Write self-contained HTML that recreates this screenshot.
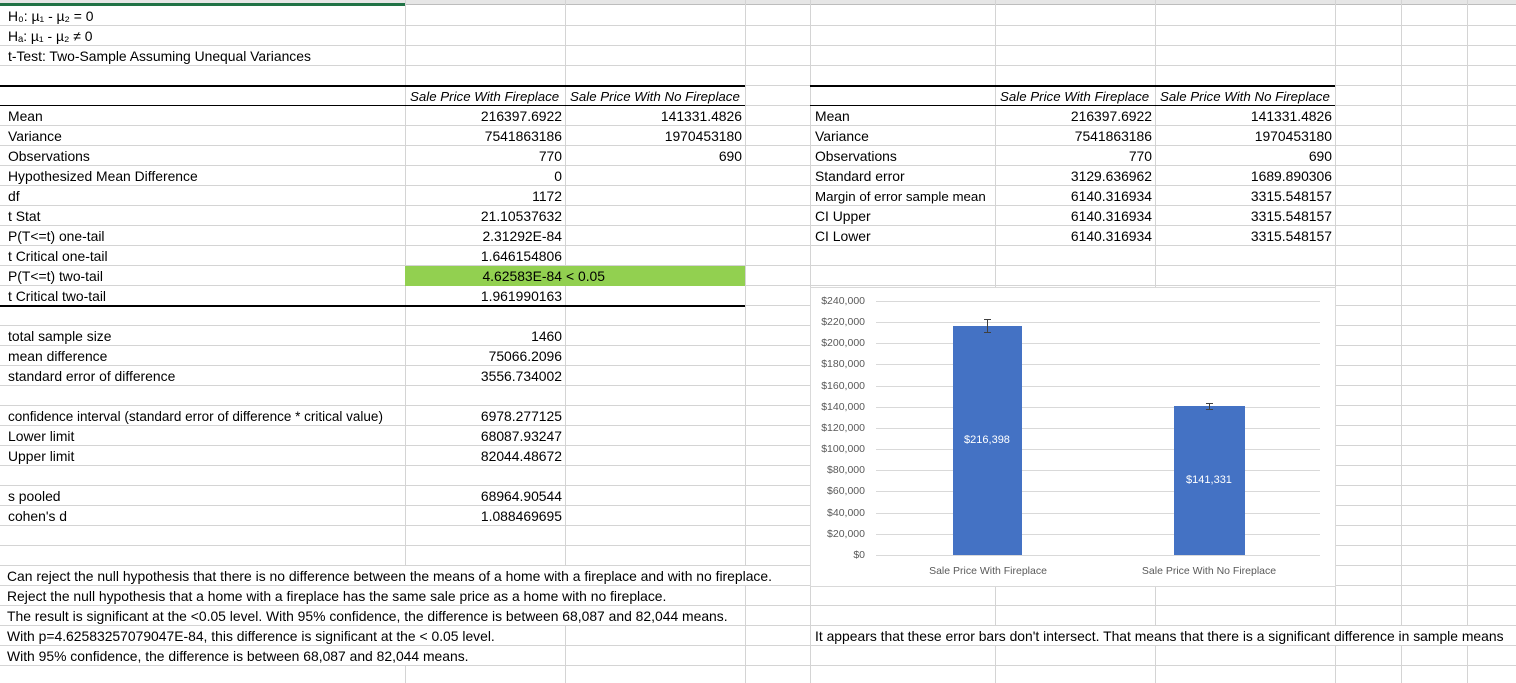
<!DOCTYPE html>
<html><head><meta charset="utf-8"><style>
*{margin:0;padding:0;box-sizing:border-box}
body{width:1516px;height:683px;overflow:hidden;position:relative;background:#fff;font-family:"Liberation Sans",Arial,sans-serif;font-size:13.9px;color:#000}
#grid{position:absolute;left:0;top:6px;width:1516px;height:677px;background:repeating-linear-gradient(to bottom,transparent 0 19px,#d4d4d4 19px 20px)}
.v{position:absolute;top:0;width:1px;height:683px;background:#d4d4d4}
.t{position:absolute;height:19px;line-height:21px;white-space:nowrap;padding:0 3px;overflow:visible}
.r{text-align:right}
.w{background:#fff}
.i{font-style:italic;font-size:13.3px}
.hb{position:absolute;background:#000}
.gl{position:absolute;left:876px;width:444px;height:1px;background:#d9d9d9}
.yl{position:absolute;left:805px;width:60px;text-align:right;font-size:10.5px;color:#595959;line-height:12px}
</style></head><body>
<div id="grid"></div>
<div style="position:absolute;left:0;top:0;width:1516px;height:5px;background:#e6e6e6"></div>
<div style="position:absolute;left:0;top:3px;width:405px;height:3px;background:#217346"></div>
<div style="position:absolute;left:405px;top:4px;width:1111px;height:1px;background:#bdbdbd"></div>
<div class="v" style="left:405px"></div><div class="v" style="left:565px"></div><div class="v" style="left:745px"></div><div class="v" style="left:810px"></div><div class="v" style="left:995px"></div><div class="v" style="left:1155px"></div><div class="v" style="left:1335px"></div><div class="v" style="left:1401px"></div><div class="v" style="left:1467px"></div>

<div style="position:absolute;left:405px;top:266px;width:340px;height:20px;background:#92d050"></div>

<div class="t" style="left:5px;top:6px">H₀: µ₁ - µ₂ = 0</div>
<div class="t" style="left:5px;top:26px">Hₐ: µ₁ - µ₂ ≠ 0</div>
<div class="t" style="left:5px;top:46px">t-Test: Two-Sample Assuming Unequal Variances</div>
<div class="t i" style="left:407px;top:86px">Sale Price With Fireplace</div>
<div class="t i" style="left:567px;top:86px">Sale Price With No Fireplace</div>
<div class="t" style="left:5px;top:106px">Mean</div>
<div class="t" style="left:5px;top:126px">Variance</div>
<div class="t" style="left:5px;top:146px">Observations</div>
<div class="t" style="left:5px;top:166px">Hypothesized Mean Difference</div>
<div class="t" style="left:5px;top:186px">df</div>
<div class="t" style="left:5px;top:206px">t Stat</div>
<div class="t" style="left:5px;top:226px">P(T&lt;=t) one-tail</div>
<div class="t" style="left:5px;top:246px">t Critical one-tail</div>
<div class="t" style="left:5px;top:266px">P(T&lt;=t) two-tail</div>
<div class="t" style="left:5px;top:286px">t Critical two-tail</div>
<div class="t" style="left:5px;top:326px">total sample size</div>
<div class="t" style="left:5px;top:346px">mean difference</div>
<div class="t" style="left:5px;top:366px">standard error of difference</div>
<div class="t" style="left:5px;top:406px;font-size:13.5px">confidence interval (standard error of difference * critical value)</div>
<div class="t" style="left:5px;top:426px">Lower limit</div>
<div class="t" style="left:5px;top:446px">Upper limit</div>
<div class="t" style="left:5px;top:486px">s pooled</div>
<div class="t" style="left:5px;top:506px">cohen's d</div>

<div class="t r" style="left:405px;width:160px;top:106px">216397.6922</div>
<div class="t r" style="left:405px;width:160px;top:126px">7541863186</div>
<div class="t r" style="left:405px;width:160px;top:146px">770</div>
<div class="t r" style="left:405px;width:160px;top:166px">0</div>
<div class="t r" style="left:405px;width:160px;top:186px">1172</div>
<div class="t r" style="left:405px;width:160px;top:206px">21.10537632</div>
<div class="t r" style="left:405px;width:160px;top:226px">2.31292E-84</div>
<div class="t r" style="left:405px;width:160px;top:246px">1.646154806</div>
<div class="t r" style="left:405px;width:160px;top:266px">4.62583E-84</div>
<div class="t" style="left:563px;top:266px">&lt; 0.05</div>
<div class="t r" style="left:405px;width:160px;top:286px">1.961990163</div>
<div class="t r" style="left:405px;width:160px;top:326px">1460</div>
<div class="t r" style="left:405px;width:160px;top:346px">75066.2096</div>
<div class="t r" style="left:405px;width:160px;top:366px">3556.734002</div>
<div class="t r" style="left:405px;width:160px;top:406px">6978.277125</div>
<div class="t r" style="left:405px;width:160px;top:426px">68087.93247</div>
<div class="t r" style="left:405px;width:160px;top:446px">82044.48672</div>
<div class="t r" style="left:405px;width:160px;top:486px">68964.90544</div>
<div class="t r" style="left:405px;width:160px;top:506px">1.088469695</div>
<div class="t r" style="left:565px;width:180px;top:106px">141331.4826</div>
<div class="t r" style="left:565px;width:180px;top:126px">1970453180</div>
<div class="t r" style="left:565px;width:180px;top:146px">690</div>

<div class="hb" style="left:0;top:85px;width:745px;height:2px"></div>
<div class="hb" style="left:0;top:105px;width:745px;height:1px"></div>
<div class="hb" style="left:0;top:305px;width:745px;height:2px"></div>

<div class="hb" style="left:810px;top:85px;width:525px;height:2px"></div>
<div class="hb" style="left:810px;top:105px;width:525px;height:1px"></div>
<div class="t i" style="left:997px;top:86px">Sale Price With Fireplace</div>
<div class="t i" style="left:1157px;top:86px">Sale Price With No Fireplace</div>
<div class="t" style="left:812px;top:106px">Mean</div>
<div class="t" style="left:812px;top:126px">Variance</div>
<div class="t" style="left:812px;top:146px">Observations</div>
<div class="t" style="left:812px;top:166px">Standard error</div>
<div class="t" style="left:812px;top:186px;font-size:13.3px">Margin of error sample mean</div>
<div class="t" style="left:812px;top:206px">CI Upper</div>
<div class="t" style="left:812px;top:226px">CI Lower</div>
<div class="t r" style="left:995px;width:160px;top:106px">216397.6922</div>
<div class="t r" style="left:995px;width:160px;top:126px">7541863186</div>
<div class="t r" style="left:995px;width:160px;top:146px">770</div>
<div class="t r" style="left:995px;width:160px;top:166px">3129.636962</div>
<div class="t r" style="left:995px;width:160px;top:186px">6140.316934</div>
<div class="t r" style="left:995px;width:160px;top:206px">6140.316934</div>
<div class="t r" style="left:995px;width:160px;top:226px">6140.316934</div>
<div class="t r" style="left:1155px;width:180px;top:106px">141331.4826</div>
<div class="t r" style="left:1155px;width:180px;top:126px">1970453180</div>
<div class="t r" style="left:1155px;width:180px;top:146px">690</div>
<div class="t r" style="left:1155px;width:180px;top:166px">1689.890306</div>
<div class="t r" style="left:1155px;width:180px;top:186px">3315.548157</div>
<div class="t r" style="left:1155px;width:180px;top:206px">3315.548157</div>
<div class="t r" style="left:1155px;width:180px;top:226px">3315.548157</div>

<div class="t w" style="left:1px;width:809px;top:566px;padding-left:6px">Can reject the null hypothesis that there is no difference between the means of a home with a fireplace and with no fireplace.</div>
<div class="t w" style="left:1px;width:744px;top:586px;padding-left:6px">Reject the null hypothesis that a home with a fireplace has the same sale price as a home with no fireplace.</div>
<div class="t w" style="left:1px;width:744px;top:606px;padding-left:6px">The result is significant at the &lt;0.05 level. With 95% confidence, the difference is between 68,087 and 82,044 means.</div>
<div class="t w" style="left:1px;width:564px;top:626px;padding-left:6px">With p=4.62583257079047E-84, this difference is significant at the &lt; 0.05 level.</div>
<div class="t w" style="left:1px;width:564px;top:646px;padding-left:6px">With 95% confidence, the difference is between 68,087 and 82,044 means.</div>
<div class="t w" style="left:811px;width:705px;top:626px;padding-left:4px">It appears that these error bars don't intersect. That means that there is a significant difference in sample means</div>

<div style="position:absolute;left:810px;top:287px;width:526px;height:300px;background:#fff;border:1px solid #d9d9d9"></div>
<div class="gl" style="top:301px"></div><div class="gl" style="top:322px"></div><div class="gl" style="top:343px"></div><div class="gl" style="top:364px"></div><div class="gl" style="top:386px"></div><div class="gl" style="top:407px"></div><div class="gl" style="top:428px"></div><div class="gl" style="top:449px"></div><div class="gl" style="top:470px"></div><div class="gl" style="top:491px"></div><div class="gl" style="top:513px"></div><div class="gl" style="top:534px"></div><div class="gl" style="top:555px"></div>
<div class="yl" style="top:295px">$240,000</div><div class="yl" style="top:316px">$220,000</div><div class="yl" style="top:337px">$200,000</div><div class="yl" style="top:358px">$180,000</div><div class="yl" style="top:380px">$160,000</div><div class="yl" style="top:401px">$140,000</div><div class="yl" style="top:422px">$120,000</div><div class="yl" style="top:443px">$100,000</div><div class="yl" style="top:464px">$80,000</div><div class="yl" style="top:485px">$60,000</div><div class="yl" style="top:507px">$40,000</div><div class="yl" style="top:528px">$20,000</div><div class="yl" style="top:549px">$0</div>
<div style="position:absolute;left:953px;top:326px;width:69px;height:229px;background:#4472c4"></div>
<div style="position:absolute;left:1174px;top:406px;width:71px;height:149px;background:#4472c4"></div>
<svg style="position:absolute;left:0;top:0" width="1516" height="683"><g stroke="#404040" stroke-width="1" fill="none"><path d="M987.5 319.5V332.5M984 319.5H991M984 332.5H991"/><path d="M1209.5 403.5V409.5M1206 403.5H1213M1206 409.5H1213"/></g></svg>
<div style="position:absolute;left:937px;top:434px;width:100px;text-align:center;color:#fff;font-size:11px">$216,398</div>
<div style="position:absolute;left:1159px;top:474px;width:100px;text-align:center;color:#fff;font-size:11px">$141,331</div>
<div style="position:absolute;left:888px;top:565px;width:200px;text-align:center;color:#595959;font-size:10.5px">Sale Price With Fireplace</div>
<div style="position:absolute;left:1109px;top:565px;width:200px;text-align:center;color:#595959;font-size:10.5px">Sale Price With No Fireplace</div>
</body></html>
